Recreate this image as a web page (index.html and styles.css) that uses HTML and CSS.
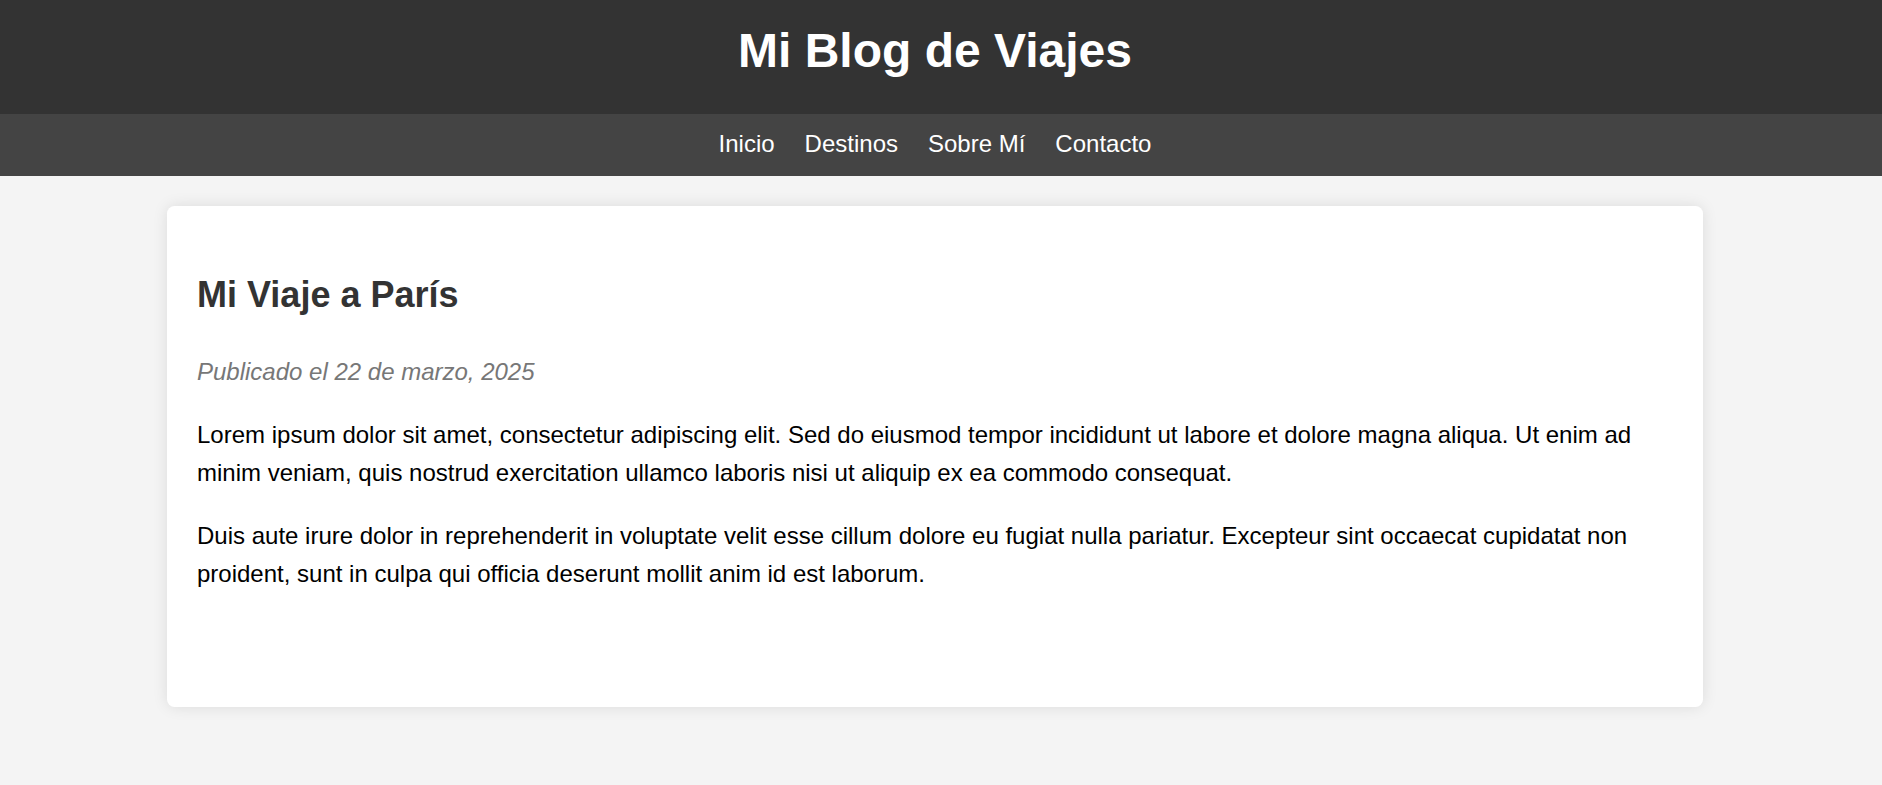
FILE: index.html
```html
<!DOCTYPE html>
<html lang="es">
<head>
<meta charset="utf-8">
<title>Mi Blog de Viajes</title>
<link rel="stylesheet" href="styles.css">
</head>
<body>
<header class="site-header">
  <h1 class="site-title">Mi Blog de Viajes</h1>
</header>
<nav class="site-nav">
  <ul class="nav-list">
    <li><a class="nav-link" href="#">Inicio</a></li>
    <li><a class="nav-link" href="#">Destinos</a></li>
    <li><a class="nav-link" href="#">Sobre Mí</a></li>
    <li><a class="nav-link" href="#">Contacto</a></li>
  </ul>
</nav>
<main class="main">
  <article class="post">
    <h2 class="post-title">Mi Viaje a París</h2>
    <p class="post-date">Publicado el 22 de marzo, 2025</p>
    <p class="post-text">Lorem ipsum dolor sit amet, consectetur adipiscing elit. Sed do eiusmod tempor incididunt ut labore et dolore magna aliqua. Ut enim ad minim veniam, quis nostrud exercitation ullamco laboris nisi ut aliquip ex ea commodo consequat.</p>
    <p class="post-text">Duis aute irure dolor in reprehenderit in voluptate velit esse cillum dolore eu fugiat nulla pariatur. Excepteur sint occaecat cupidatat non proident, sunt in culpa qui officia deserunt mollit anim id est laborum.</p>
  </article>
</main>
</body>
</html>
```
FILE: styles.css
```css
* { box-sizing: border-box; }

html, body {
  margin: 0;
  padding: 0;
}

body {
  font-family: "Liberation Sans", Arial, sans-serif;
  font-size: 24px;
  line-height: 1.6;
  background: #f4f4f4;
  color: #000;
}

.site-header {
  background: #333;
  color: #fff;
  text-align: center;
  padding: 22.5px 12px 36.3px 0;
}

.site-title {
  margin: 0;
  font-size: 48px;
  line-height: 55.2px;
  font-weight: bold;
}

.site-nav {
  background: #444;
  padding: 11.4px 12px 12.2px 0;
}

.nav-list {
  list-style: none;
  margin: 0;
  padding: 0;
  display: flex;
  justify-content: center;
  gap: 30px;
}

.nav-link {
  color: #fff;
  text-decoration: none;
}

.main {
  padding: 30px 12px 30px 0;
}

.post {
  max-width: 1536px;
  margin: 0 auto;
  background: #fff;
  border-radius: 7.5px;
  box-shadow: 0 0 15px rgba(0, 0, 0, 0.1);
  padding: 30px 30px 114px;
}

.post-title {
  margin: 29.9px 0;
  font-size: 36px;
  color: #333;
}

.post-date {
  margin: 24px 0;
  color: #777;
  font-style: italic;
}

.post-text {
  margin: 24px 0 0;
}
```
